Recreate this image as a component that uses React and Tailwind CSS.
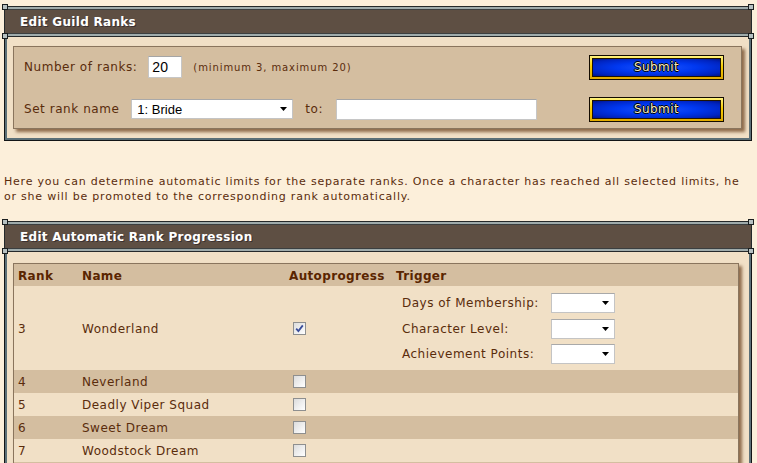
import React from "react";

function Knob({ pos }) {
  return (
    <span
      className={`absolute h-[6px] w-[6px] border border-[#1b1f20] bg-[#b7c1c1] ${pos}`}
    />
  );
}

function SectionHeader({ title }) {
  return (
    <div className="relative h-[31px] border border-[#25292a] bg-[#5e4f43] shadow-[inset_0_2px_0_#9fabab,inset_0_3px_0_#3b3f40,inset_0_-2px_0_#9fabab,inset_0_-3px_0_#3b3f40]">
      <Knob pos="-left-[3px] -top-[3px]" />
      <Knob pos="-right-[3px] -top-[3px]" />
      <Knob pos="-left-[3px] -bottom-[3px]" />
      <Knob pos="-right-[3px] -bottom-[3px]" />
      <div className="flex h-full items-center pl-[15px] text-[12px] font-bold tracking-[0.3px] text-white [text-shadow:1px_1px_0_#3a3030]">
        {title}
      </div>
    </div>
  );
}

function Box({ children, pr = "pr-[7px]", pb = "pb-[9px]", pt = "pt-[9px]" }) {
  return (
    <div className="border-x border-b border-[#121516]">
      <div className={`border-x-2 border-b-2 border-[#5c7077] bg-[#f1e0c6] pl-[6px] ${pt} ${pr} ${pb}`}>
        {children}
      </div>
    </div>
  );
}

function SubmitBtn() {
  return (
    <div className="ml-auto mr-[17px] h-[25px] w-[135px] border border-[#140c00] bg-[linear-gradient(#fff27e,#f8cc00_45%,#e0aa00)] p-[2px]">
      <div className="flex h-full w-full items-center justify-center border border-[#201400] bg-[radial-gradient(ellipse_at_center,#1d55ff_0%,#0038f0_45%,#0024c0_80%,#001488_100%)] text-[12px] tracking-[0.4px] text-[#f4e9bf] [text-shadow:1px_0_0_#000,-1px_0_0_#000,0_1px_0_#000,0_-1px_0_#000]">
        Submit
      </div>
    </div>
  );
}

function Arrow() {
  return (
    <svg width="7" height="4" viewBox="0 0 7 4" className="shrink-0">
      <path d="M0 0H7L3.5 4Z" fill="#000" />
    </svg>
  );
}

function Select({ w, h, text }) {
  return (
    <div
      className={`flex ${w} ${h} items-center border border-[#c4c4c4] border-t-[#a9a9a9] bg-white pl-[5px] pr-[5px] font-['Liberation_Sans',Arial,sans-serif] text-[13px] tracking-normal text-black`}
    >
      <span className="flex-1 leading-none">{text}</span>
      <Arrow />
    </div>
  );
}

function Checkbox({ checked }) {
  return (
    <div className="flex h-[13px] w-[13px] items-center justify-center border border-[#8e8f8f] bg-[linear-gradient(135deg,#dcdcdc,#ffffff)]">
      {checked && (
        <svg width="9" height="9" viewBox="0 0 9 9">
          <path d="M1.2 4.6L3.4 7L7.8 1.4" fill="none" stroke="#3a4d9a" strokeWidth="1.8" />
        </svg>
      )}
    </div>
  );
}

const rows = [
  { rank: "4", name: "Neverland" },
  { rank: "5", name: "Deadly Viper Squad" },
  { rank: "6", name: "Sweet Dream" },
  { rank: "7", name: "Woodstock Dream" },
  { rank: "", name: "" },
];

export default function App() {
  return (
    <div className="h-[463px] overflow-hidden bg-[#fcefda] pl-[4px] pr-[5px] pt-[6px] font-['DejaVu_Sans',Verdana,sans-serif] text-[#5a2c0c]">
      <SectionHeader title="Edit Guild Ranks" />
      <Box>
        <div className="border border-[#8a755d] bg-[#d4bea0] pb-[8px] pl-[10px] pt-[8px] shadow-[3px_3px_3px_rgba(110,70,35,0.75)]">
          <div className="flex h-[24px] items-center">
            <span className="text-[12px] tracking-[0.55px]">Number of ranks:</span>
            <div className="ml-[11px] flex h-[22px] w-[34px] items-center border border-[#c6c6c6] border-t-[#a5a5a5] bg-white pl-[3px] font-['Liberation_Sans',Arial,sans-serif] text-[14px] text-black">
              20
            </div>
            <span className="ml-[11px] text-[10px] tracking-[0.9px]">(minimum 3, maximum 20)</span>
            <SubmitBtn />
          </div>
          <div className="mt-[17px] flex h-[24px] items-center pt-[2px]">
            <span className="text-[12px] tracking-[0.55px]">Set rank name</span>
            <div className="ml-[12px]">
              <Select w="w-[162px]" h="h-[20px]" text="1: Bride" />
            </div>
            <span className="ml-[12px] text-[12px] tracking-[0.55px]">to:</span>
            <div className="ml-[13px] h-[21px] w-[201px] border border-[#c6c6c6] border-t-[#a5a5a5] bg-white" />
            <SubmitBtn />
          </div>
        </div>
      </Box>

      <p className="mt-[33px] text-[11px] leading-[15px] tracking-[0.78px]">
        Here you can determine automatic limits for the separate ranks. Once a character has reached all selected limits, he or she will be promoted to the corresponding rank automatically.
      </p>

      <div className="mt-[17px]">
        <SectionHeader title="Edit Automatic Rank Progression" />
        <Box pr="pr-[10px]" pt="pt-[11px]">
          <div className="border border-[#8a755d] bg-[#f1e0c6] text-[12px] tracking-[0.5px] shadow-[3px_3px_3px_rgba(110,70,35,0.75)]">
            <div className="flex h-[22px] items-center bg-[#d4bea0] pt-[2px] font-bold tracking-[0.35px] text-[#5a2500]">
              <div className="w-[64px] pl-[4px]">Rank</div>
              <div className="w-[207px] pl-[4px]">Name</div>
              <div className="w-[107px] pl-[4px]">Autoprogress</div>
              <div className="pl-[4px]">Trigger</div>
            </div>
            <div className="flex h-[84px] items-center pt-[1px]">
              <div className="w-[64px] pl-[4px]">3</div>
              <div className="w-[207px] pl-[4px]">Wonderland</div>
              <div className="w-[107px] pl-[8px]">
                <Checkbox checked />
              </div>
              <div className="flex flex-col pl-[10px]">
                {["Days of Membership:", "Character Level:", "Achievement Points:"].map((l) => (
                  <div key={l} className="flex h-[25.5px] items-center">
                    <span className="w-[149px]">{l}</span>
                    <Select w="w-[64px]" h="h-[20px]" text="" />
                  </div>
                ))}
              </div>
            </div>
            {rows.map((r, i) => (
              <div
                key={i}
                className={`flex h-[23px] items-center ${i % 2 === 0 ? "bg-[#d4bea0]" : "bg-[#f1e0c6]"}`}
              >
                <div className="w-[64px] pl-[4px]">{r.rank}</div>
                <div className="w-[207px] pl-[4px]">{r.name}</div>
                {r.rank && (
                  <div className="w-[107px] pl-[8px]">
                    <Checkbox />
                  </div>
                )}
              </div>
            ))}
          </div>
        </Box>
      </div>
    </div>
  );
}
